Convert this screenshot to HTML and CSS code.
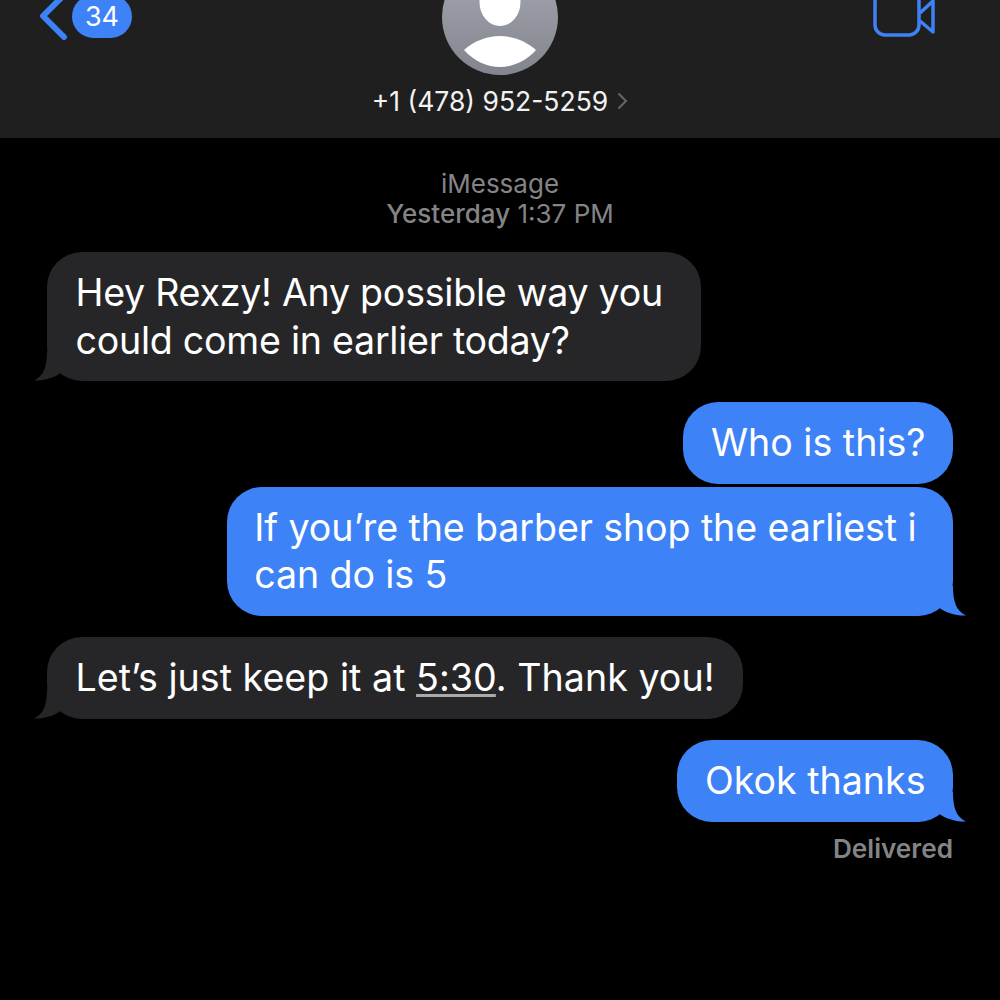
FILE: index.html
```html
<!DOCTYPE html>
<html lang="en">
<head>
<meta charset="utf-8">
<title>Messages</title>
<link rel="stylesheet" href="styles.css">
</head>
<body>
<div class="screen">
  <header class="topbar">
    <div class="back">
      <svg class="chevron" width="32" height="44" viewBox="0 0 32 44"><path d="M28 -1 L7 20 L28 41" fill="none" stroke="#3d82f6" stroke-width="6" stroke-linecap="round" stroke-linejoin="round"/></svg>
      <span class="badge">34</span>
    </div>
    <div class="contact">
      <div class="avatar">
        <svg width="116" height="116" viewBox="0 0 116 116"><ellipse cx="58" cy="43" rx="20.5" ry="24" fill="#fff"/><path d="M22 91 C32 82 45 77 58 77 C71 77 84 82 94 91 C84 102 71 108 58 108 C45 108 32 102 22 91 Z" fill="#fff"/></svg>
      </div>
      <div class="name">+1 (478) 952-5259<svg class="name-chevron" width="11" height="18" viewBox="0 0 11 18"><path d="M1.5 1.5 L9 9 L1.5 16.5" fill="none" stroke="#666" stroke-width="2"/></svg></div>
    </div>
    <div class="video">
      <svg width="64" height="40" viewBox="0 0 64 40"><rect x="4" y="-8" width="44" height="43" rx="10" fill="none" stroke="#3d82f6" stroke-width="3.5"/><path d="M49 13 L62 1 L62 32 L49 21" fill="none" stroke="#3d82f6" stroke-width="3.5" stroke-linejoin="round"/></svg>
    </div>
  </header>
  <main class="thread">
    <div class="meta"><div>iMessage</div><div><span class="meta-day">Yesterday</span> 1:37 PM</div></div>
    <div class="bubble in first wrap-a">Hey Rexzy! Any possible way you<br>could come in earlier today?<svg class="tail" width="54" height="30" viewBox="0 0 54 30"><path d="M13 0 C13 15 10 25 0 29.5 C10 30 20 27 28 21 C34 27 44 30 54 30 L54 0 Z" fill="#262628"/></svg></div>
    <div class="bubble out gap single">Who is this?</div>
    <div class="bubble out tight wrap-b">If you’re the barber shop the earliest i<br>can do is 5<svg class="tail" width="54" height="30" viewBox="0 0 54 30"><path d="M13 0 C13 15 10 25 0 29.5 C10 30 20 27 28 21 C34 27 44 30 54 30 L54 0 Z" fill="#3d82f6"/></svg></div>
    <div class="bubble in gap single wide">Let’s just keep it at <span class="link">5:30</span>. Thank you!<svg class="tail" width="54" height="30" viewBox="0 0 54 30"><path d="M13 0 C13 15 10 25 0 29.5 C10 30 20 27 28 21 C34 27 44 30 54 30 L54 0 Z" fill="#262628"/></svg></div>
    <div class="bubble out gap single">Okok thanks<svg class="tail" width="54" height="30" viewBox="0 0 54 30"><path d="M13 0 C13 15 10 25 0 29.5 C10 30 20 27 28 21 C34 27 44 30 54 30 L54 0 Z" fill="#3d82f6"/></svg></div>
    <div class="delivered">Delivered</div>
  </main>
</div>
</body>
</html>
```
FILE: styles.css
```css
* { box-sizing: border-box; }
html, body { margin: 0; height: 100%; background: #000; }
body { font-family: Inter, "Liberation Sans", sans-serif; overflow: hidden; }
.screen { width: 1000px; height: 1000px; overflow: hidden; background: #000; }

.topbar {
  height: 138px;
  background: #1f1f1f;
  display: grid;
  grid-template-columns: 1fr auto 1fr;
  overflow: hidden;
  align-items: start;
}
.back { display: flex; align-items: flex-start; margin-top: -4px; padding-left: 36px; }
.chevron { flex: none; }
.badge {
  margin-left: 4px;
  width: 60px;
  height: 43px;
  margin-top: -1px;
  border-radius: 22px;
  background: #3d82f6;
  color: #fff;
  font-size: 27px;
  display: flex;
  align-items: center;
  justify-content: center;
}
.contact { display: flex; flex-direction: column; align-items: center; margin-top: -41px; }
.avatar {
  width: 116px;
  height: 116px;
  border-radius: 50%;
  overflow: hidden;
  background: linear-gradient(#a7a9b1, #82858e);
}
.avatar svg { display: block; }
.name {
  margin-top: 10px;
  color: #f2f2f2;
  font-size: 26.5px;
  line-height: 32px;
  display: flex;
  align-items: center;
  white-space: nowrap;
}
.name-chevron { margin-left: 9px; flex: none; }
.video { display: flex; justify-content: flex-end; padding-right: 65px; }

.thread { display: flex; flex-direction: column; padding: 31px 47px 0; }
.meta { text-align: center; color: #848486; font-size: 26px; line-height: 30px; font-weight: 400; }
.meta-day { font-weight: 500; }
.bubble {
  position: relative;
  isolation: isolate;
  padding: 17px 27.5px;
  font-size: 37.6px;
  line-height: 47.5px;
  border-radius: 35px;
  color: #fff;
  white-space: nowrap;
  width: fit-content;
}
.bubble.in { background: #262628; align-self: flex-start; }
.bubble.out { background: #3d82f6; align-self: flex-end; }
.single { padding-bottom: 17.5px; }
.wide { letter-spacing: 0.03px; padding-left: 28.5px; padding-right: 28.5px; }
.wrap-a { letter-spacing: -0.26px; padding-left: 28.5px; padding-right: 38px; }
.wrap-b { letter-spacing: -0.1px; padding-right: 36.5px; }
.first { margin-top: 23px; }
.gap { margin-top: 21px; }
.tight { margin-top: 2.5px; }
.tail { position: absolute; bottom: 0; display: block; z-index: -1; }
.in .tail { left: -13px; }
.out .tail { right: -13px; transform: scaleX(-1); }
.link { text-decoration: underline; text-decoration-thickness: 2.5px; text-underline-offset: 3px; text-decoration-color: #aaa; }
.delivered { align-self: flex-end; margin-top: 12px; color: #848486; font-size: 26.2px; line-height: 30px; font-weight: 600; }
```
